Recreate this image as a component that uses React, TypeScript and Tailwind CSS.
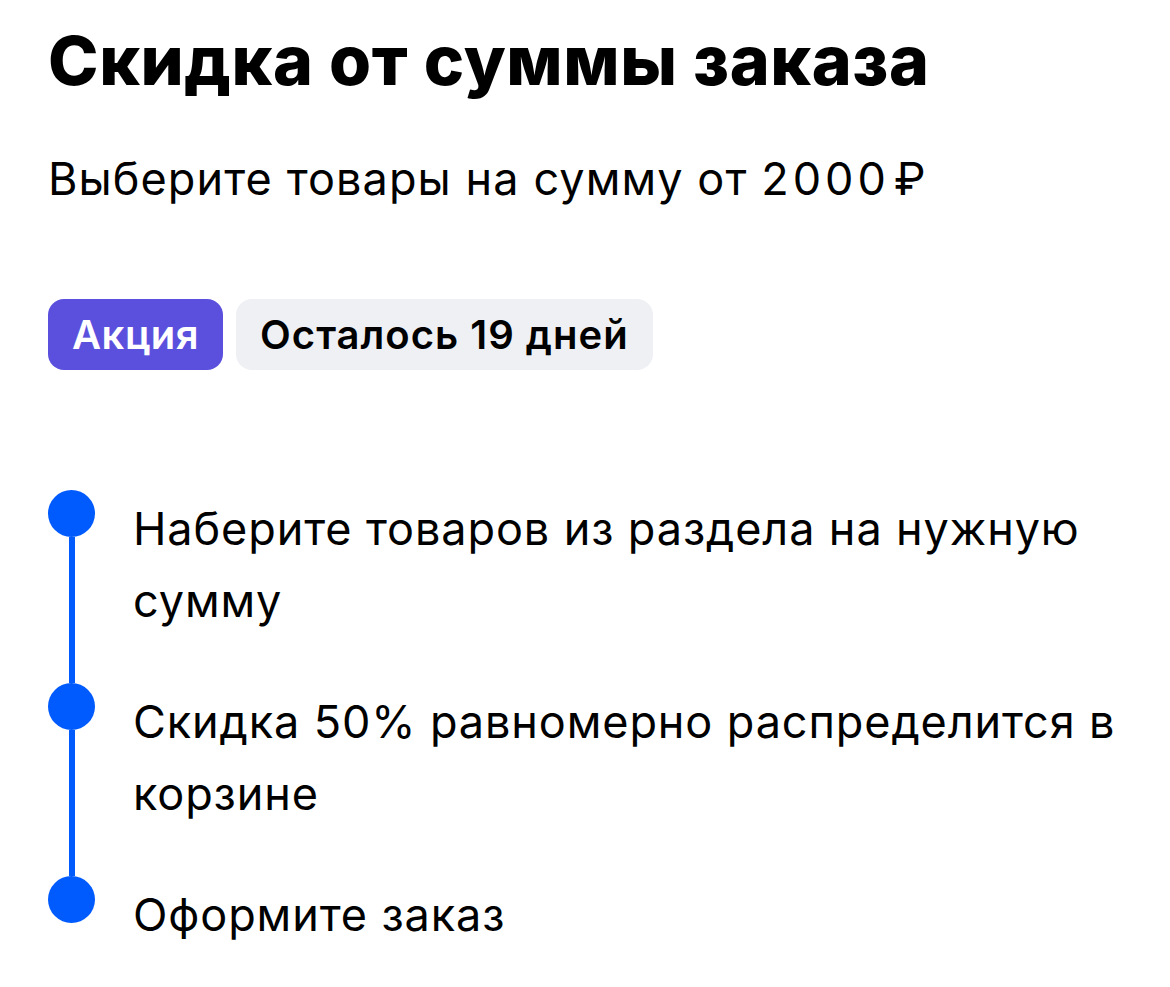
import React from 'react';

const steps = [
  'Наберите товаров из раздела на нужную сумму',
  'Скидка 50% равномерно распределится в корзине',
  'Оформите заказ',
];

export default function App() {
  return (
    <div className="min-h-screen bg-white pl-12 pr-6 pt-[20px] text-black" style={{ fontFamily: 'Inter, "Noto Sans", sans-serif' }}>
      <h1 className="text-[68px] font-extrabold leading-[80px] tracking-[0.6px]">Скидка от суммы заказа</h1>
      <p className="mt-[52px] text-[45px] leading-[54px] tracking-[1.1px]">
        Выберите товары на сумму от <span className="tracking-[4px]">2000</span>
        <span className="ml-[4px]">₽</span>
      </p>

      <div className="mt-[93px] flex gap-[13px]">
        <span className="flex h-[71px] items-center rounded-[16px] bg-[#5b50de] px-6 text-[40px] font-semibold tracking-[0.5px] text-white">
          Акция
        </span>
        <span className="flex h-[71px] items-center rounded-[16px] bg-[#eff0f4] px-6 text-[40px] font-semibold tracking-[1px]">
          Осталось 19 дней
        </span>
      </div>

      {/* Steps */}
      <div className="mt-[120px] flex flex-col">
        {steps.map((s, i) => (
          <div key={i} className="flex gap-[38px]">
            <div className="flex w-[47px] shrink-0 flex-col items-center">
              <div className="h-[47px] w-[47px] shrink-0 rounded-full bg-[#005bff]" />
              {i < steps.length - 1 && <div className="w-[6px] flex-1 bg-[#005bff]" />}
            </div>
            <p className={`mt-[3px] text-[45px] leading-[72px] tracking-[0.9px] ${i < steps.length - 1 ? 'pb-[46px]' : ''}`}>{s}</p>
          </div>
        ))}
      </div>
    </div>
  );
}
